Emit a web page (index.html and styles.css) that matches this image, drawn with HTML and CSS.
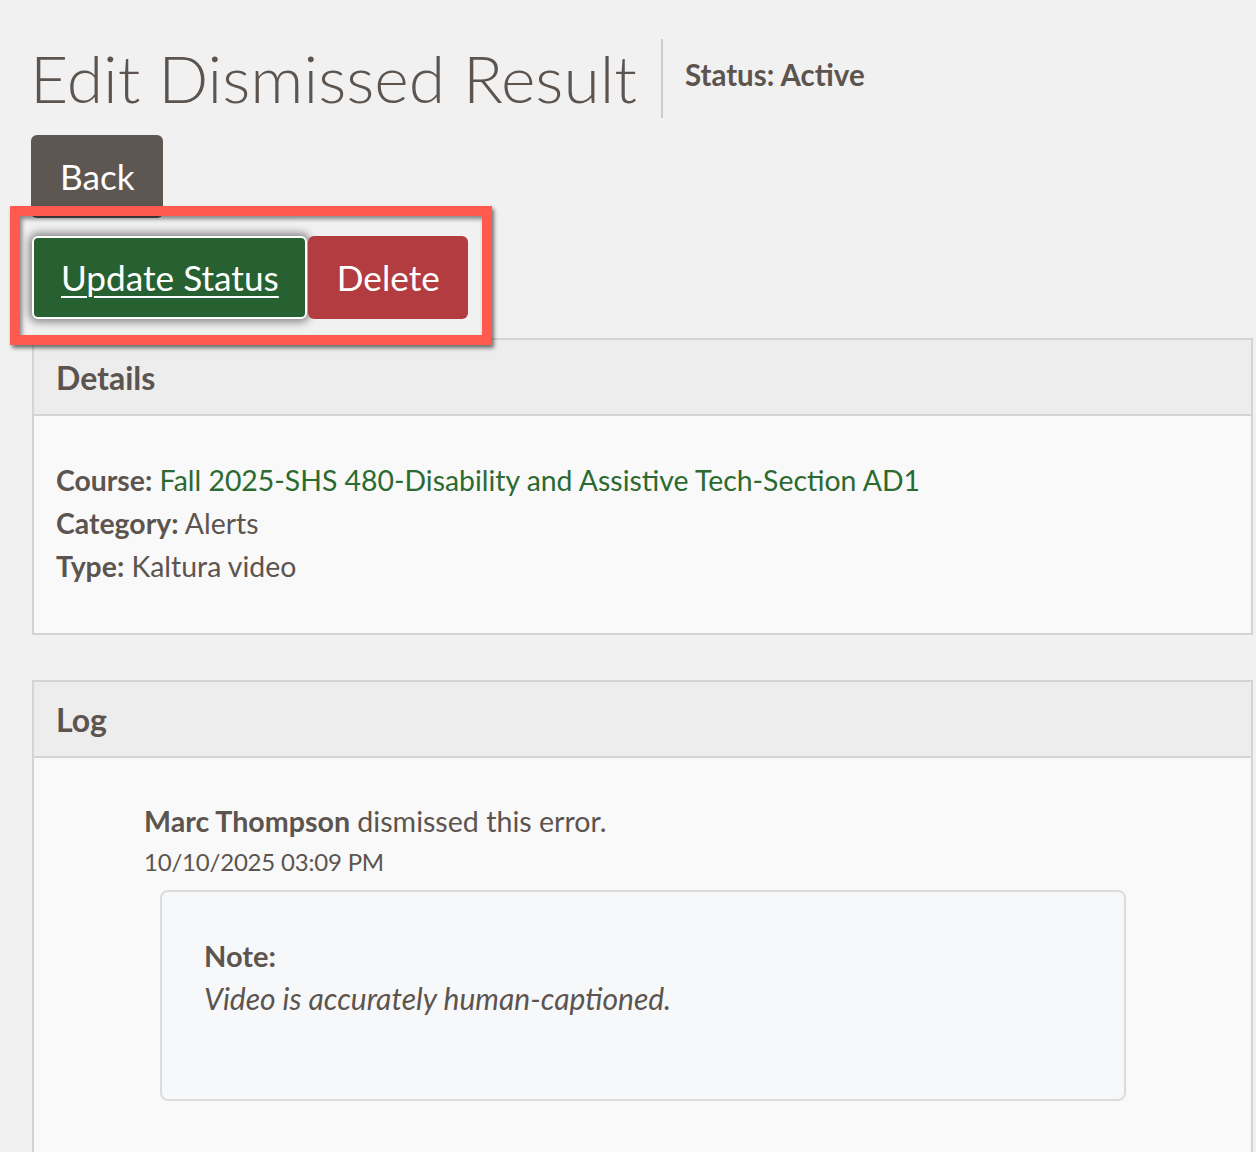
FILE: index.html
```
<!DOCTYPE html>
<html lang="en">
<head>
<meta charset="utf-8">
<title>Edit Dismissed Result</title>
<link rel="stylesheet" href="styles.css">
</head>
<body>
<div class="page">
  <header class="page-header">
    <h1 class="title">Edit Dismissed Result</h1>
    <span class="divider"></span>
    <span class="status">Status: Active</span>
  </header>

  <div class="back-row">
    <a class="btn btn-back" href="#">Back</a>
  </div>

  <div class="action-row">
    <a class="btn btn-update" href="#">Update Status</a>
    <a class="btn btn-delete" href="#">Delete</a>
  </div>

  <section class="panel panel-details">
    <div class="panel-head">Details</div>
    <div class="panel-body details-body">
      <div class="line"><b>Course:</b> <a class="course" href="#">Fall 2025-SHS 480-Disability and Assistive Tech-Section AD1</a></div>
      <div class="line"><b>Category:</b> Alerts</div>
      <div class="line"><b>Type:</b> Kaltura video</div>
    </div>
  </section>

  <section class="panel panel-log">
    <div class="panel-head">Log</div>
    <div class="panel-body log-body">
      <div class="entry">
        <div class="entry-who"><b>Marc Thompson</b> dismissed this error.</div>
        <div class="entry-date">10/10/2025 03:09 PM</div>
        <div class="note">
          <div class="note-label">Note:</div>
          <div class="note-text">Video is accurately human-captioned.</div>
        </div>
      </div>
    </div>
  </section>

  <div class="highlight"></div>
</div>
</body>
</html>
```

FILE: styles.css
```
html, body {
  margin: 0;
  padding: 0;
}
body {
  background: #f1f1f1;
  color: #5c544f;
  font-family: Lato, "Noto Sans", "DejaVu Sans", sans-serif;
  height: 1152px;
  overflow: hidden;
}
.page {
  position: relative;
  padding: 38px 3px 0 32px;
}
.page-header {
  display: flex;
  align-items: center;
  height: 80px;
}
.title {
  margin: 0 0 0 -2px;
  font-size: 66px;
  font-weight: 300;
  line-height: 80px;
  color: #5c544f;
}
.divider {
  width: 2px;
  height: 79px;
  background: #cfcdcb;
  margin: 1px 22px 0 24px;
}
.status {
  font-size: 29.5px;
  font-weight: 700;
  margin-bottom: 7px;
}
.back-row {
  margin-top: 17px;
  display: flex;
}
.btn {
  display: inline-flex;
  align-items: center;
  box-sizing: border-box;
  height: 83px;
  padding: 0 28px 0 29px;
  font-size: 35.2px;
  line-height: 1;
  color: #ffffff;
  text-decoration: none;
  border-radius: 6px;
}
.btn-back {
  margin-left: -1px;
  background: #5e5651;
}
.action-row {
  margin-top: 18px;
  display: flex;
}
.btn-update {
  background: #286131;
  border: 2px solid #ffffff;
  padding: 0 26px 0 27px;
  text-decoration: underline;
  text-decoration-thickness: 2px;
  text-underline-offset: 5px;
  box-shadow: 0 0 9px 3px rgba(0, 0, 0, 0.45);
  position: relative;
}
.btn-delete {
  background: #b33c40;
  margin-left: 1px;
  position: relative;
}
.panel {
  border: 2px solid #d4d4d4;
}
.panel-details {
  margin-top: 19px;
}
.panel-log {
  margin-top: 45px;
}
.panel-head {
  background: #ededed;
  height: 74px;
  border-bottom: 2px solid #d4d4d4;
  box-sizing: content-box;
  display: flex;
  align-items: center;
  padding-left: 22px;
  font-size: 32px;
  font-weight: 700;
}
.panel-body {
  background: #f9f9f9;
}
.details-body {
  padding: 43px 22px 45px;
  font-size: 28.4px;
  line-height: 43px;
}
.details-body b {
  font-weight: 700;
}
.course {
  color: #2b6a31;
  text-decoration: none;
}
.log-body {
  padding: 44px 22px 60px 110px;
  min-height: 400px;
}
.entry-who {
  font-size: 28.6px;
  line-height: 39px;
}
.entry-date {
  margin-top: 3px;
  font-size: 24px;
  line-height: 36px;
  letter-spacing: -0.2px;
}
.note {
  margin: 10px 0 0 16px;
  background: #f7f8fa;
  border: 2px solid #dcdcdc;
  border-radius: 8px;
  padding: 43px 42px 80px;
  box-sizing: border-box;
  width: 966px;
  line-height: 42px;
}
.note-label {
  font-size: 29px;
  font-weight: 700;
}
.note-text {
  font-size: 30px;
  font-style: italic;
}
.highlight {
  position: absolute;
  left: 10px;
  top: 206px;
  width: 482px;
  height: 139px;
  box-sizing: border-box;
  border: 10px solid #ff5a4d;
  box-shadow: 2px 3px 4px rgba(0, 0, 0, 0.55), inset 2px 3px 4px rgba(0, 0, 0, 0.45);
  z-index: 5;
  pointer-events: none;
}
```
